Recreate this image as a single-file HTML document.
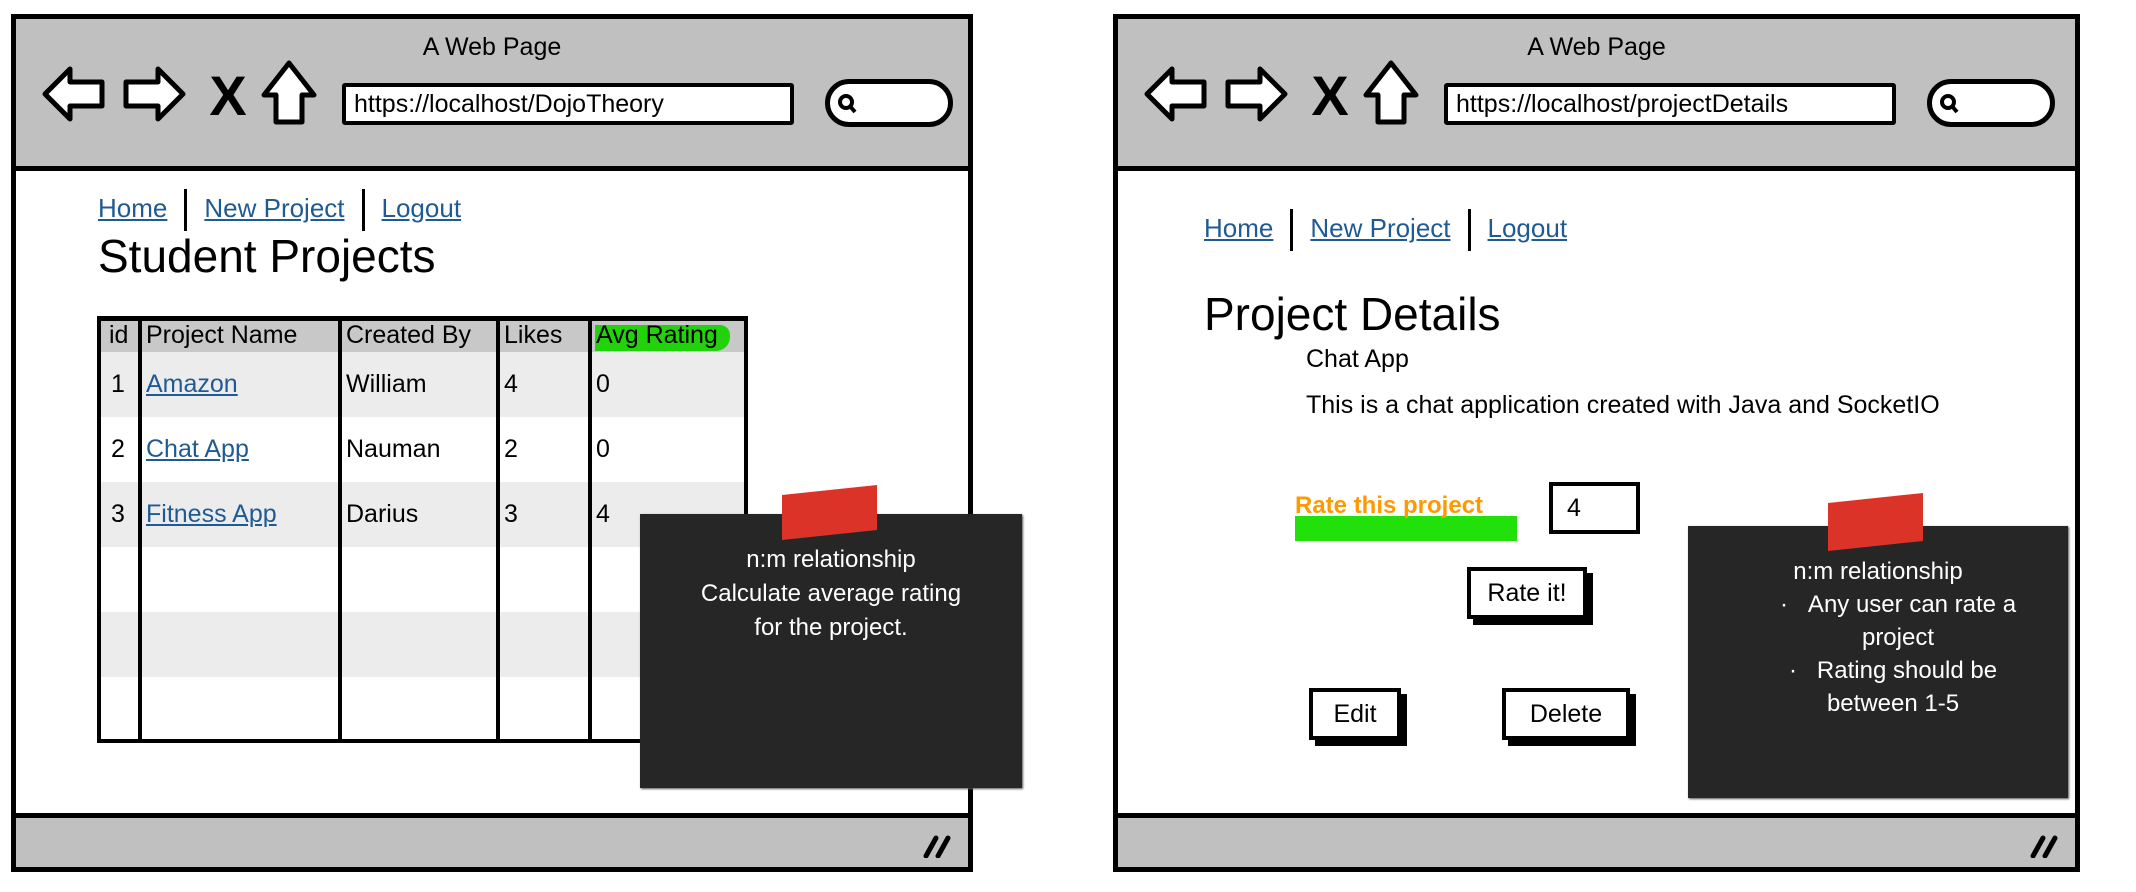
<!DOCTYPE html>
<html><head><meta charset="utf-8"><style>
*{margin:0;padding:0;box-sizing:border-box}
body{width:2136px;height:892px;background:#fff;position:relative;overflow:hidden;font-family:"Liberation Sans",sans-serif;color:#000}
.a{position:absolute}
.frame{position:absolute;border:5px solid #000;background:#fff}
.hdr{position:absolute;left:0;right:0;top:0;height:152px;background:#c0c0c0;border-bottom:5px solid #000}
.ftr{position:absolute;left:0;right:0;bottom:0;height:54px;background:#c0c0c0;border-top:5px solid #000}
.title{position:absolute;left:0;right:0;top:14px;text-align:center;font-size:25px}
.url{position:absolute;height:42px;border:4px solid #000;background:#fff;font-size:25px;line-height:34px;padding-left:8px;border-radius:3px}
.srch{position:absolute;width:128px;height:48px;border:5px solid #000;background:#fff;border-radius:24px}
.nav{position:absolute;font-size:26px;color:#1f5a94}
.nav span{text-decoration:underline}
.nav i{display:inline-block;width:3px;height:42px;background:#000;vertical-align:middle;margin:0 17px}
a,.lnk{color:#1f5a94;text-decoration:underline}
.note{position:absolute;background:#262626;color:#fff;font-size:24px;text-align:center;box-shadow:1px 1px 2px #555}
.tape{position:absolute;background:#dc3328}
.btn{position:absolute;border:4px solid #000;background:#fff;font-size:25px;text-align:center;box-shadow:6px 6px 0 #000}
</style></head><body>

<!-- LEFT FRAME -->
<div class="frame" style="left:11px;top:14px;width:962px;height:858px">
  <div class="hdr"><div class="title">A Web Page</div>
   <svg class="a" style="left:0;top:0" width="320" height="120" viewBox="0 0 320 120">
    <g fill="#fff" stroke="#000" stroke-width="5" stroke-linejoin="round">
     <path d="M29 75 L54 50 L54 63 L86 63 L86 87 L54 87 L54 100 Z"/>
     <path d="M167 75 L142 50 L142 63 L110 63 L110 87 L142 87 L142 100 Z"/>
     <path d="M273 44 L248 76 L260 76 L260 103 L286 103 L286 76 L298 76 Z"/>
    </g>
    <text x="212" y="96" font-size="56" font-weight="bold" text-anchor="middle" font-family="Liberation Sans">X</text>
   </svg>
   <div class="url" style="left:326px;top:64px;width:452px">https://localhost/DojoTheory</div>
   <div class="srch" style="left:809px;top:60px"><svg class="a" style="left:7px;top:9px" width="22" height="22"><circle cx="9" cy="9" r="6" fill="none" stroke="#000" stroke-width="4"/><path d="M12 12 L18 19" stroke="#000" stroke-width="4"/></svg></div>
  </div>
  <div class="ftr"><svg class="a" style="right:14px;top:16px" width="34" height="24"><path d="M6 22 L16 4 M18 22 L28 4" stroke="#000" stroke-width="5" stroke-linecap="round"/></svg></div>
  <div class="nav" style="left:82px;top:170px"><span>Home</span><i></i><span>New Project</span><i></i><span>Logout</span></div>
  <div class="a" style="left:82px;top:210px;font-size:46px">Student Projects</div>
</div>
<div class="a" style="left:97px;top:316px;width:651px;height:427px;border:4px solid #000;border-top-width:5px">
 <div class="a" style="left:0;right:0;top:0;height:31px;background:#c8c8c8"></div>
 <div class="a" style="left:0;right:0;top:31px;height:65px;background:#ececec"></div>
 <div class="a" style="left:0;right:0;top:161px;height:65px;background:#ececec"></div>
 <div class="a" style="left:0;right:0;top:291px;height:65px;background:#ececec"></div>
 <div class="a" style="left:37px;top:0;bottom:0;width:4px;background:#000"></div>
 <div class="a" style="left:237px;top:0;bottom:0;width:4px;background:#000"></div>
 <div class="a" style="left:395px;top:0;bottom:0;width:4px;background:#000"></div>
 <div class="a" style="left:487px;top:0;bottom:0;width:4px;background:#000"></div>
 <div class="a" style="left:494px;top:4px;width:135px;height:26px;background:#22d20a;border-radius:0 10px 14px 0"></div>
 <div class="a" style="font-size:25px;top:0;left:8px">id</div>
 <div class="a" style="font-size:25px;top:0;left:45px">Project Name</div>
 <div class="a" style="font-size:25px;top:0;left:245px">Created By</div>
 <div class="a" style="font-size:25px;top:0;left:403px">Likes</div>
 <div class="a" style="font-size:25px;top:0;left:495px">Avg Rating</div>
 <div class="a" style="font-size:25px;top:49px;left:10px">1</div><div class="a lnk" style="font-size:25px;top:49px;left:45px">Amazon</div><div class="a" style="font-size:25px;top:49px;left:245px">William</div><div class="a" style="font-size:25px;top:49px;left:403px">4</div><div class="a" style="font-size:25px;top:49px;left:495px">0</div>
 <div class="a" style="font-size:25px;top:114px;left:10px">2</div><div class="a lnk" style="font-size:25px;top:114px;left:45px">Chat App</div><div class="a" style="font-size:25px;top:114px;left:245px">Nauman</div><div class="a" style="font-size:25px;top:114px;left:403px">2</div><div class="a" style="font-size:25px;top:114px;left:495px">0</div>
 <div class="a" style="font-size:25px;top:179px;left:10px">3</div><div class="a lnk" style="font-size:25px;top:179px;left:45px">Fitness App</div><div class="a" style="font-size:25px;top:179px;left:245px">Darius</div><div class="a" style="font-size:25px;top:179px;left:403px">3</div><div class="a" style="font-size:25px;top:179px;left:495px">4</div>
</div>
<div class="note" style="left:640px;top:514px;width:382px;height:274px;line-height:34px;padding-top:29px">n:m relationship<br>Calculate average rating<br>for the project.</div>
<div class="tape" style="left:782px;top:490px;width:95px;height:45px;transform:skewY(-6deg)"></div>

<!-- RIGHT FRAME -->
<div class="frame" style="left:1113px;top:14px;width:967px;height:858px">
  <div class="hdr"><div class="title">A Web Page</div>
   <svg class="a" style="left:0;top:0" width="320" height="120" viewBox="0 0 320 120">
    <g fill="#fff" stroke="#000" stroke-width="5" stroke-linejoin="round">
     <path d="M29 75 L54 50 L54 63 L86 63 L86 87 L54 87 L54 100 Z"/>
     <path d="M167 75 L142 50 L142 63 L110 63 L110 87 L142 87 L142 100 Z"/>
     <path d="M273 44 L248 76 L260 76 L260 103 L286 103 L286 76 L298 76 Z"/>
    </g>
    <text x="212" y="96" font-size="56" font-weight="bold" text-anchor="middle" font-family="Liberation Sans">X</text>
   </svg>
   <div class="url" style="left:326px;top:64px;width:452px">https://localhost/projectDetails</div>
   <div class="srch" style="left:809px;top:60px"><svg class="a" style="left:7px;top:9px" width="22" height="22"><circle cx="9" cy="9" r="6" fill="none" stroke="#000" stroke-width="4"/><path d="M12 12 L18 19" stroke="#000" stroke-width="4"/></svg></div>
  </div>
  <div class="ftr"><svg class="a" style="right:14px;top:16px" width="34" height="24"><path d="M6 22 L16 4 M18 22 L28 4" stroke="#000" stroke-width="5" stroke-linecap="round"/></svg></div>
  <div class="nav" style="left:86px;top:190px"><span>Home</span><i></i><span>New Project</span><i></i><span>Logout</span></div>
  <div class="a" style="left:86px;top:268px;font-size:46px">Project Details</div>
  <div class="a" style="left:188px;top:326px;font-size:25px">Chat App</div>
  <div class="a" style="left:188px;top:372px;font-size:25px">This is a chat application created with Java and SocketIO</div>
</div>
<div class="a" style="left:1295px;top:516px;width:222px;height:25px;background:#22e00a"></div>
<div class="a" style="left:1295px;top:492px;font-size:24px;font-weight:bold;color:#ff9900">Rate this project</div>
<div class="a" style="left:1549px;top:482px;width:91px;height:52px;border:4px solid #000;font-size:25px;padding:8px 0 0 14px">4</div>
<div class="btn" style="left:1467px;top:567px;width:120px;height:52px;line-height:44px">Rate it!</div>
<div class="btn" style="left:1309px;top:688px;width:92px;height:52px;line-height:44px">Edit</div>
<div class="btn" style="left:1502px;top:688px;width:128px;height:52px;line-height:44px">Delete</div>
<div class="note" style="left:1688px;top:526px;width:380px;height:272px;line-height:33px;padding-top:29px;font-size:24px">
 <div>n:m relationship</div>
 <div style="padding-left:40px">·&nbsp;&nbsp;&nbsp;Any user can rate a<br>project</div>
 <div style="padding-left:30px">·&nbsp;&nbsp;&nbsp;Rating should be<br>between 1-5</div>
</div>
<div class="tape" style="left:1828px;top:498px;width:95px;height:48px;transform:skewY(-6deg)"></div>
</body></html>
